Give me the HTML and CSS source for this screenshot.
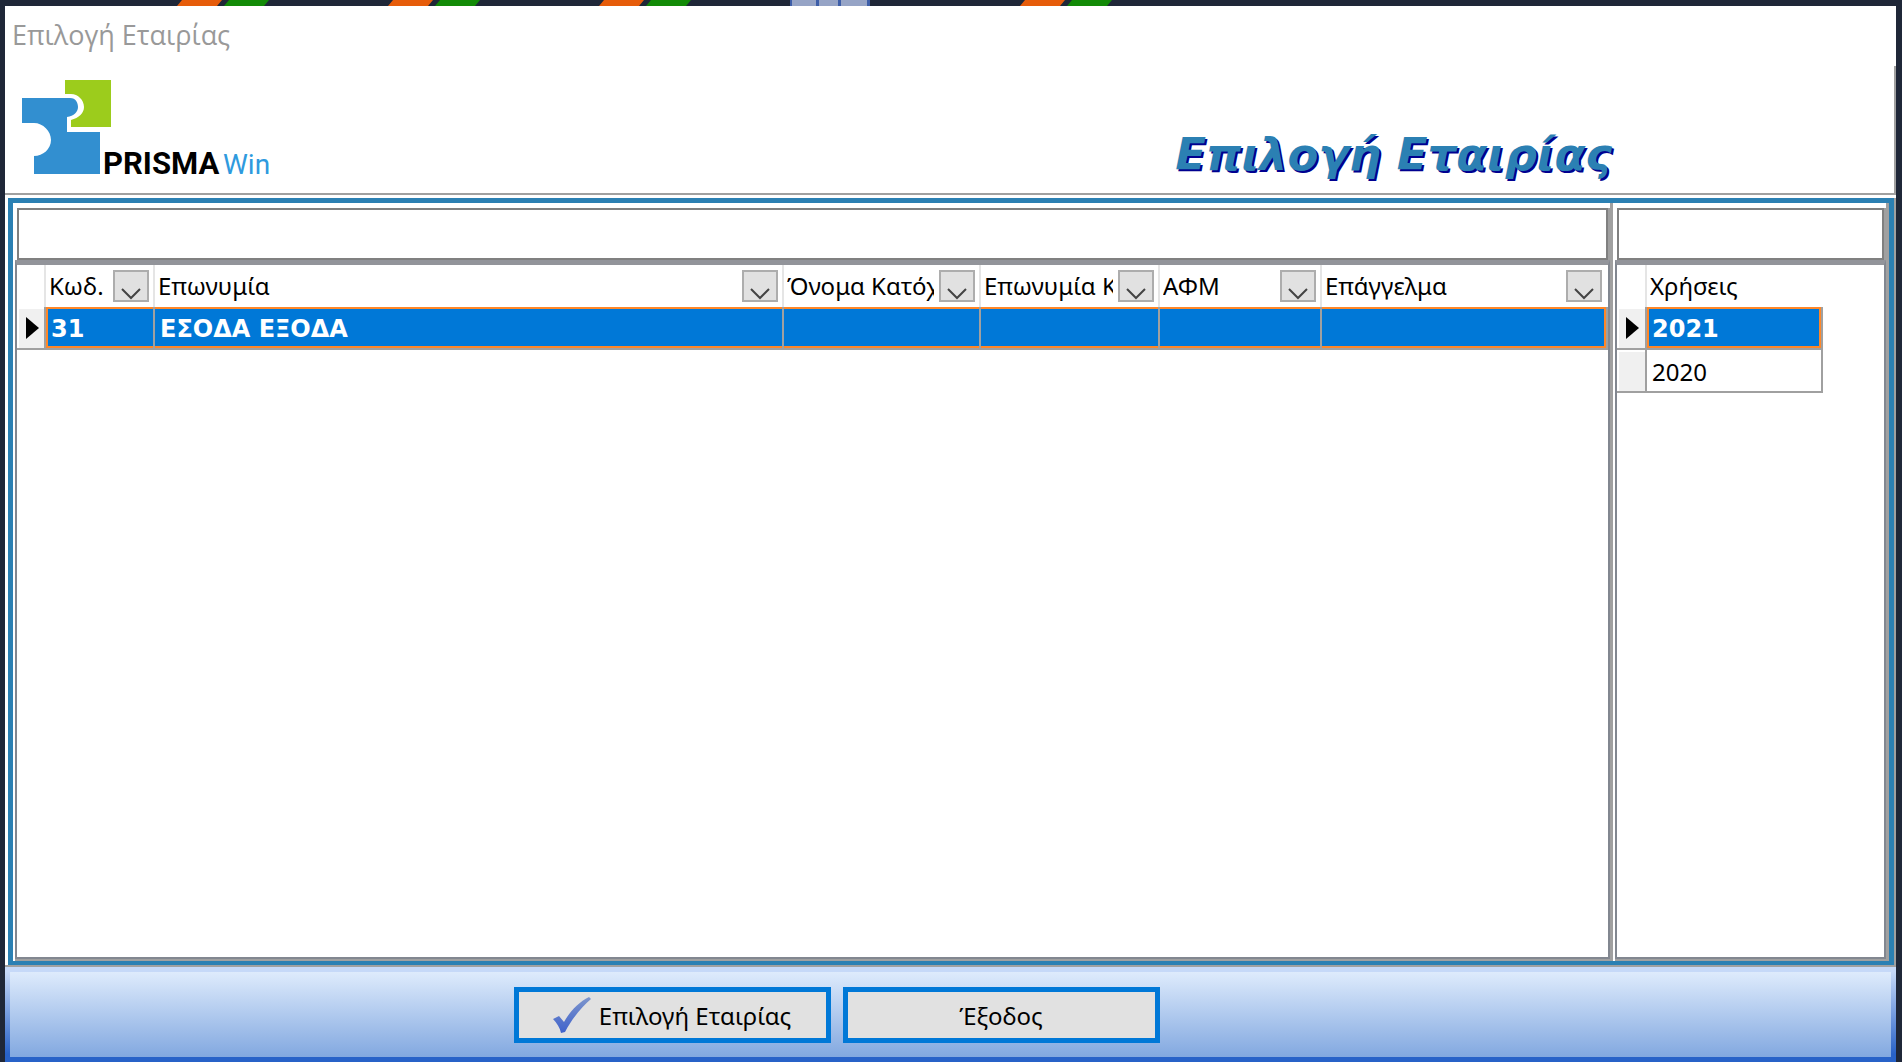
FILE: index.html
```html
<!DOCTYPE html>
<html lang="el">
<head>
    <meta charset="UTF-8">
    <meta name="viewport" content="width=device-width, initial-scale=1.0">
    <title>Επιλογή Εταιρίας</title>
    <link rel="stylesheet" href="styles.css">
</head>
<body>

<svg class="desktop-strip" width="1902" height="6" viewBox="0 0 1902 6" aria-hidden="true">
    <path fill="#e65c0a" d="M182 0h40l-5 6h-40zM393 0h40l-5 6h-40zM604 0h40l-5 6h-40zM1025 0h40l-5 6h-40z"/>
    <path fill="#128a06" d="M229 0h40l-5 6h-40zM440 0h40l-5 6h-40zM651 0h40l-5 6h-40zM1072 0h40l-5 6h-40z"/>
    <path fill="#3d5ea8" d="M790 0h80v6h-80z"/>
    <path fill="#96a4c6" d="M792 0h24v6h-24zM819 0h19v6h-19zM841 0h26v6h-26z"/>
</svg>

<div class="window">
    <div class="titlebar">Επιλογή Εταιρίας</div>

    <header class="banner">
        <svg class="logo" width="270" height="100" viewBox="0 0 270 100" role="img" aria-label="PRISMA Win">
            <path fill="#9ccc1c" d="M47 2h46v47H53v-7c8-2 13-7 13-13 0-7-6-13-13-13h-6z"/>
            <path fill="#328fd0" d="M4 20h48c6 0 8 5 8 9 0 5-4 9-11 10v15h33v42H16V78c9 0 17-7 17-16s-8-17-17-17H4z"/>
            <text class="logo-prisma" x="85" y="96">PRISMA</text>
            <text class="logo-win" x="205" y="96">Win</text>
        </svg>
        <h1>Επιλογή Εταιρίας</h1>
    </header>

    <main class="frame">
        <section class="panel companies">
            <input class="search" type="text" aria-label="Αναζήτηση εταιρίας">
            <div class="grid-box">
                <table>
                    <colgroup>
                        <col class="col-mark"><col class="col-code"><col class="col-name"><col class="col-owner">
                        <col class="col-surname"><col class="col-afm"><col class="col-job">
                    </colgroup>
                    <thead>
                        <tr>
                            <th></th>
                            <th><div class="head"><span>Κωδ.</span><button class="filter" aria-label="Φίλτρο Κωδ."><svg width="20" height="12" viewBox="0 0 20 12"><path d="M1 1l9 9 9-9"/></svg></button></div></th>
                            <th><div class="head"><span>Επωνυμία</span><button class="filter" aria-label="Φίλτρο Επωνυμία"><svg width="20" height="12" viewBox="0 0 20 12"><path d="M1 1l9 9 9-9"/></svg></button></div></th>
                            <th><div class="head"><span>Όνομα Κατόχου</span><button class="filter" aria-label="Φίλτρο Όνομα Κατόχου"><svg width="20" height="12" viewBox="0 0 20 12"><path d="M1 1l9 9 9-9"/></svg></button></div></th>
                            <th><div class="head"><span>Επωνυμία Κατόχου</span><button class="filter" aria-label="Φίλτρο Επωνυμία Κατόχου"><svg width="20" height="12" viewBox="0 0 20 12"><path d="M1 1l9 9 9-9"/></svg></button></div></th>
                            <th><div class="head"><span>ΑΦΜ</span><button class="filter" aria-label="Φίλτρο ΑΦΜ"><svg width="20" height="12" viewBox="0 0 20 12"><path d="M1 1l9 9 9-9"/></svg></button></div></th>
                            <th><div class="head"><span>Επάγγελμα</span><button class="filter" aria-label="Φίλτρο Επάγγελμα"><svg width="20" height="12" viewBox="0 0 20 12"><path d="M1 1l9 9 9-9"/></svg></button></div></th>
                        </tr>
                    </thead>
                    <tbody>
                        <tr class="selected">
                            <td class="mark"><svg width="13" height="22" viewBox="0 0 13 22"><path d="M0 0l13 11L0 22z"/></svg></td>
                            <td>31</td>
                            <td>ΕΣΟΔΑ ΕΞΟΔΑ</td>
                            <td></td>
                            <td></td>
                            <td></td>
                            <td></td>
                        </tr>
                    </tbody>
                </table>
            </div>
        </section>

        <section class="panel years">
            <input class="search" type="text" aria-label="Αναζήτηση χρήσης">
            <div class="grid-box">
                <table>
                    <colgroup>
                        <col class="col-mark"><col class="col-year">
                    </colgroup>
                    <thead>
                        <tr>
                            <th></th>
                            <th><div class="head"><span>Χρήσεις</span></div></th>
                        </tr>
                    </thead>
                    <tbody>
                        <tr class="selected">
                            <td class="mark"><svg width="13" height="22" viewBox="0 0 13 22"><path d="M0 0l13 11L0 22z"/></svg></td>
                            <td>2021</td>
                        </tr>
                        <tr>
                            <td class="mark"></td>
                            <td>2020</td>
                        </tr>
                    </tbody>
                </table>
            </div>
        </section>
    </main>

    <footer class="actions">
        <button class="action" type="button">
            <svg width="38" height="36" viewBox="0 0 38 36" aria-hidden="true">
                <linearGradient id="tick" x1="0" y1="0" x2="0" y2="1">
                    <stop offset="0" stop-color="#7d95cc"/>
                    <stop offset="1" stop-color="#3f62cc"/>
                </linearGradient>
                <path fill="url(#tick)" d="M0 22l6-3 5 6C17 14 26 5 36 0l2 2C29 10 20 20 12 35l-4 1C7 31 4 26 0 22z"/>
            </svg>
            Επιλογή Εταιρίας
        </button>
        <button class="action" type="button">Έξοδος</button>
    </footer>
</div>

</body>
</html>
```
FILE: styles.css
```css
* {
    box-sizing: border-box;
}
body {
    margin: 0;
    height: 100vh;
    overflow: hidden;
    display: flex;
    flex-direction: column;
    background: #1f2738;
    font-family: "Noto Sans", "Open Sans", sans-serif;
    font-size: 24px;
    color: #000;
}
.desktop-strip {
    display: block;
    flex: none;
}
.window {
    flex: 1;
    min-height: 0;
    margin: 0 6px 0 5px;
    display: flex;
    flex-direction: column;
    background: #fff;
}
.titlebar {
    height: 60px;
    padding: 0 7px;
    line-height: 58px;
    font-family: "Open Sans", sans-serif;
    font-size: 27px;
    color: #999;
}
.banner {
    height: 129px;
    display: flex;
    justify-content: space-between;
    align-items: flex-end;
    padding: 0 282px 12px 13px;
    border: solid #a0a0a0;
    border-width: 0 2px 2px 0;
}
.logo {
    margin-bottom: 3px;
}
.logo-prisma {
    font: bold 31px Roboto, "Liberation Sans", sans-serif;
}
.logo-win {
    font: 28px Roboto, "Liberation Sans", sans-serif;
    fill: #2f9ade;
}
h1 {
    margin: 0;
    font-family: "DejaVu Sans", sans-serif;
    font-size: 45px;
    font-style: italic;
    color: #2b80b3;
    text-shadow: 2px 2px 0 #000090;
}
.frame {
    flex: 1;
    min-height: 0;
    display: flex;
    gap: 2px;
    margin: 3px 2px 0 3px;
    padding-left: 2px;
    border: 5px solid #2b80b3;
    border-bottom-width: 4px;
    box-shadow: 2px 0 #a0a0a0;
}
.panel {
    display: flex;
    flex-direction: column;
    padding-top: 5px;
    border: solid #a0a0a0;
    border-width: 0 3px 2px 0;
}
.companies {
    flex: 1;
    min-width: 0;
}
.years {
    width: 274px;
}
.search {
    height: 52px;
    margin: 0 2px;
    padding: 0 8px;
    border: 2px solid #808080;
    background: #fff;
    box-shadow: 2px 0 #a0a0a0;
    font: inherit;
    outline: none;
}
.grid-box {
    flex: 1;
    min-height: 0;
    overflow: hidden;
    border: 2px solid #828790;
    border-top: 5px solid #92949a;
}
table {
    border-collapse: separate;
    border-spacing: 0;
    table-layout: fixed;
    width: 100%;
}
.years table {
    width: 206px;
}
.col-mark {
    width: 29px;
}
.years .col-mark {
    width: 30px;
}
.col-code {
    width: 109px;
}
.col-name {
    width: 629px;
}
.col-owner {
    width: 197px;
}
.col-surname {
    width: 179px;
}
.col-afm {
    width: 162px;
}
th {
    height: 42px;
    padding: 0 4px 0 3px;
    border-right: 2px solid #e5e5e5;
    text-align: left;
    font-weight: normal;
}
th:last-child {
    border-right-color: transparent;
}
.head {
    display: flex;
    align-items: center;
    gap: 5px;
}
.head span {
    flex: 1;
    min-width: 0;
    overflow: hidden;
    white-space: nowrap;
    line-height: 38px;
}
.filter {
    flex: none;
    width: 36px;
    height: 32px;
    display: flex;
    justify-content: center;
    align-items: flex-end;
    padding: 0;
    border: 2px solid #adadad;
    background: #e1e1e1;
}
.filter path {
    fill: none;
    stroke: #444;
    stroke-width: 2;
}
td {
    height: 43px;
    padding: 2px 5px 0;
    line-height: 36px;
    border: solid #a0a0a0;
    border-width: 0 2px 2px 0;
}
.selected td {
    background: #0078d7;
    color: #fff;
    font-family: "DejaVu Sans", sans-serif;
    font-weight: bold;
    box-shadow: inset 0 2px #ff8728, inset 0 -2px #ff8728;
}
.selected td:nth-child(2) {
    box-shadow: inset 0 2px #ff8728, inset 0 -2px #ff8728, inset 2px 0 #ff8728;
}
.selected td:last-child {
    box-shadow: inset 0 2px #ff8728, inset 0 -2px #ff8728, inset -2px 0 #ff8728;
}
.years .selected td:last-child {
    box-shadow: inset 0 0 0 2px #ff8728;
}
td.mark,
.selected td.mark {
    padding: 0 0 0 9px;
    background: #f0f0f0;
    box-shadow: inset 2px 2px #fff;
}
.mark svg {
    display: block;
}
.actions {
    height: 97px;
    display: flex;
    justify-content: center;
    align-items: center;
    gap: 12px;
    padding: 1px 228px 0 0;
    border-top: 2px solid #a0a0a0;
    background: linear-gradient(#deebfc, #82a8e0) 5px 5px / calc(100% - 10px) 85px no-repeat, linear-gradient(#c6d9f8, #c6d9f8 5%, #2862c8 92%);
}
.action {
    width: 317px;
    height: 56px;
    display: flex;
    justify-content: center;
    align-items: center;
    gap: 8px;
    border: 5px solid #0078d7;
    background: #e1e1e1;
    font: inherit;
    color: #000;
}
```
